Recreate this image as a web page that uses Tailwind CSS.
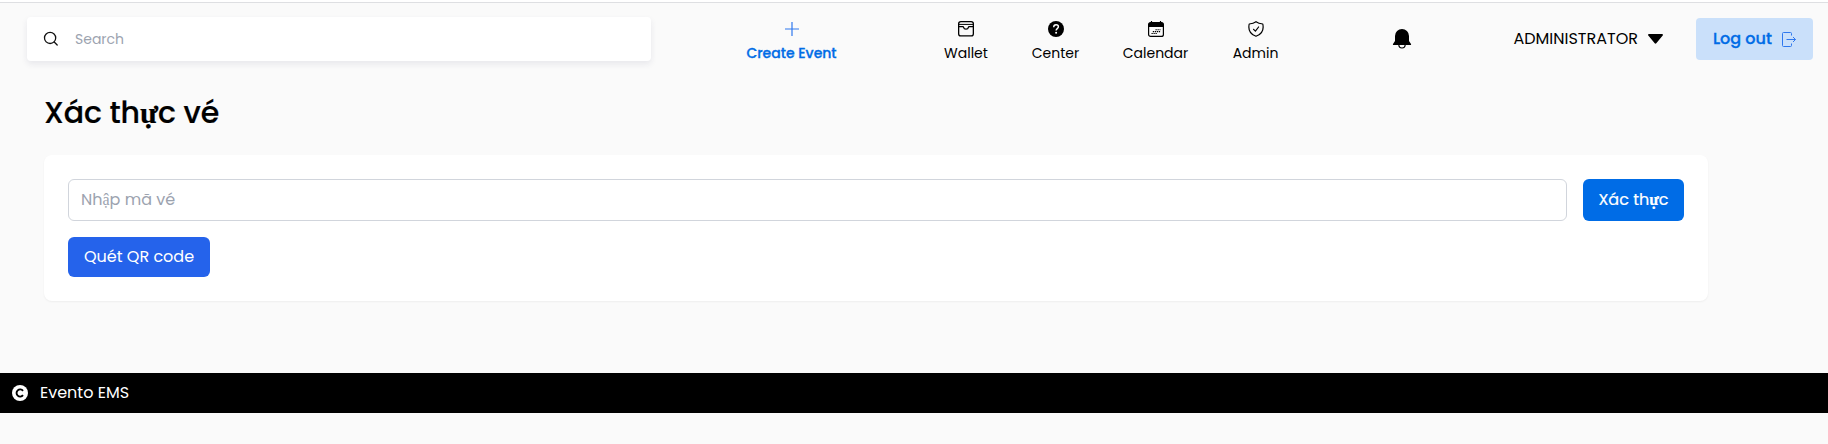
<!DOCTYPE html>
<html lang="vi">
<head>
<meta charset="utf-8">
<title>Evento EMS</title>
<script src="https://cdn.jsdelivr.net/npm/@tailwindcss/browser@4"></script>
</head>
<body class="bg-[#fafafa] font-['Poppins','Liberation_Serif',serif] text-black overflow-hidden h-[444px]">
<div class="h-[3px] bg-white border-b border-[#dedfe2]"></div>
<header class="h-[72px] flex items-center pl-[27px] pr-[15px]">
  <label class="w-[624px] h-11 bg-white rounded shadow-[0_3px_6px_rgba(40,40,90,0.09)] flex items-center pl-4 shrink-0">
    <svg class="w-4 h-4" viewBox="0 0 16 16" fill="none" stroke="#111" stroke-width="1.3" stroke-linecap="round"><circle cx="7.1" cy="6.9" r="5.6"/><path d="M11.2 11l3 3"/></svg>
    <input class="ml-4 text-sm placeholder:text-[#9ca3af] outline-none grow mr-4" placeholder="Search">
  </label>
  <nav class="flex text-sm leading-5 shrink-0 whitespace-nowrap">
    <a class="ml-[95px] w-[91px] flex flex-col items-center gap-1.5 font-medium text-[#006ce6]">
      <svg class="w-4 h-4 mt-1.5" viewBox="0 0 16 16" stroke="#2f78ee" stroke-width="1.2"><path d="M8 1v14M1 8h14"/></svg>
      <span class="[-webkit-text-stroke:0.3px_#006ce6]">Create Event</span>
    </a>
    <a class="ml-[106px] w-[46px] flex flex-col items-center gap-1.5">
      <svg class="w-4 h-4 mt-1.5" viewBox="0 0 16 16" fill="none" stroke="#000" stroke-width="1.3"><rect x=".65" y=".65" width="14.7" height="14.2" rx="2.2"/><path d="M.7 3.4h14.6" stroke-width="1"/><path d="M.7 5.6h4.1c.5 0 .7.3.8.8.2 1.100 1.200 1.800 2.400 1.800s2.200-.7 2.400-1.800c.1-.5.3-.8.8-.8h4.100"/></svg>
      <span>Wallet</span>
    </a>
    <a class="ml-[42px] w-[49px] flex flex-col items-center gap-1.5">
      <svg class="w-4 h-4 mt-1.5" viewBox="0 0 16 16"><circle cx="8" cy="8" r="8"/><path d="M5.700 6.200c0-1.500.9-2.400 2.400-2.400 1.400 0 2.300.8 2.300 2 0 1.800-2.300 1.800-2.300 3.600" fill="none" stroke="#fff" stroke-width="1.400"/><circle cx="8.100" cy="11.700" r="1" fill="#fff"/></svg>
      <span>Center</span>
    </a>
    <a class="ml-[42px] w-[67px] flex flex-col items-center gap-1.5">
      <svg class="w-4 h-4 mt-1.5" viewBox="0 0 16 16"><path d="M3.500 0v3M12.500 0v3" stroke="#000" stroke-width="1.200"/><rect x=".6" y="1.600" width="14.800" height="13.800" rx="2" fill="none" stroke="#000" stroke-width="1.200"/><path d="M.6 6V3.600a2 2 0 0 1 2-2h10.800a2 2 0 0 1 2 2V6z"/><path d="M7.500 8.700h5M4.800 10.600h7.400M3.500 12.500h5.800" stroke="#000" stroke-width="1.100" stroke-dasharray="1.300 .7"/></svg>
      <span>Calendar</span>
    </a>
    <a class="ml-[43px] w-[47px] flex flex-col items-center gap-1.5">
      <svg class="w-4 h-4 mt-1.5" viewBox="0 0 16 16" fill="none" stroke="#000" stroke-width="1.200" stroke-linejoin="round" stroke-linecap="round"><path d="M8 .7C6.200 2 3.700 2.700 1.200 3c-1.300 6.200 1 10.300 6.800 12.300C13.800 13.300 16.100 9.200 14.800 3 12.300 2.700 9.800 2 8 .7z"/><path d="M5.600 8.300l1.800 1.900 3.200-4.200"/></svg>
      <span>Admin</span>
    </a>
  </nav>
  <svg class="ml-[113px] w-5 h-5 shrink-0" viewBox="0 0 20 20"><path d="M10 0a7 7 0 0 1 7 7v5l2 3c.3.600 0 1-.6 1H1.600c-.6 0-.9-.4-.6-1l2-3V7a7 7 0 0 1 7-7z"/><path d="M6.800 15.500a3.200 3.500 0 0 0 6.400 0" fill="none" stroke="#000" stroke-width="1.200"/></svg>
  <div class="ml-auto flex items-center shrink-0">
    <span>ADMINISTRATOR</span>
    <svg class="ml-2.5 w-[15px] h-[10px]" viewBox="0 0 15 10"><path d="M1 0h13c.9 0 1.300.9.7 1.600L8.300 9.300c-.4.500-1.200.5-1.600 0L.3 1.600C-.3.9.1 0 1 0z"/></svg>
    <button class="ml-[33px] w-[117px] h-[42px] rounded bg-[#cae0fa] text-[#006ce6] font-medium flex items-center pl-[17px]">
      <span class="[-webkit-text-stroke:0.3px_#006ce6]">Log out</span>
      <svg class="ml-2.5 w-[14px] h-[15px]" viewBox="0 0 14 15" fill="none" stroke="#2f78ee"><path d="M9.500 3.500V1.500a1 1 0 0 0-1-1h-7a1 1 0 0 0-1 1v12a1 1 0 0 0 1 1h7a1 1 0 0 0 1-1v-2M4.500 7.500h9M11 5l2.500 2.500L11 10"/></svg>
    </button>
  </div>
</header>
<main class="h-[298px] pl-11 pt-5">
  <h1 class="text-3xl leading-9 font-medium -tracking-[0.1px] [-webkit-text-stroke:0.2px_#000]">Xác th<span class="font-bold">ự</span>c vé</h1>
  <section class="mt-6 w-[1664px] h-[146px] bg-white rounded-lg shadow-[0_1px_2px_rgba(0,0,0,0.05)] p-6">
    <div class="flex gap-4 h-[42px]">
      <input class="grow border border-gray-300 rounded-md px-3 outline-none placeholder:text-[#9ca3af]" placeholder="Nhập mã vé">
      <button class="w-[101px] rounded-md bg-[#006ce6] text-white [-webkit-text-stroke:0.2px_#fff]">Xác th<span class="font-bold">ự</span>c</button>
    </div>
    <button class="mt-4 w-[142px] h-10 rounded-md bg-[#2563eb] text-white">Quét QR code</button>
  </section>
</main>
<footer class="h-10 bg-black text-white flex items-center pl-3">
  <svg class="w-4 h-4" viewBox="0 0 16 16"><circle cx="8" cy="8" r="8" fill="#fff"/><path d="M11 10.200a3.600 3.600 0 1 1 0-4.400" fill="none" stroke="#000" stroke-width="1.900"/></svg>
  <span class="ml-3">Evento EMS</span>
</footer>
</body></html>
